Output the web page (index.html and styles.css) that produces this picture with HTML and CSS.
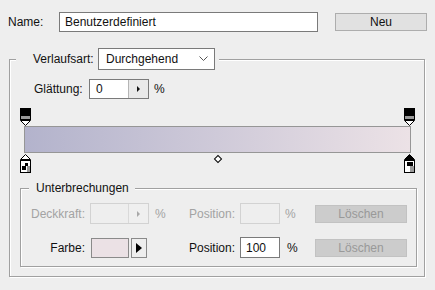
FILE: index.html
```html
<!DOCTYPE html>
<html lang="de">
<head>
  <meta charset="UTF-8">
  <title>Verlaufs-Editor</title>
  <link rel="stylesheet" href="styles.css">
</head>
<body>
  <div class="name-row">
    <span class="name-label">Name:</span>
    <div class="field name-field">Benutzerdefiniert</div>
    <button class="btn new-btn">Neu</button>
  </div>

  <fieldset class="group gradient-group">
    <legend class="type-legend">
      <span class="type-label">Verlaufsart:</span>
      <div class="field select">
        <span>Durchgehend</span>
        <svg width="9" height="6" viewBox="0 0 9 6"><path d="M0.5 0.5 L4.5 4.5 L8.5 0.5" fill="none" stroke="#555" stroke-width="1"/></svg>
      </div>
    </legend>

    <div class="smooth-row">
      <span class="smooth-label">Glättung:</span>
      <div class="field spin">
        <span class="spin-value">0</span>
        <span class="spin-arrow"><svg width="4" height="6" viewBox="0 0 4 6"><path d="M0 0 L3 3 L0 6 Z" fill="#111"/></svg></span>
      </div>
      <span class="unit">%</span>
    </div>

    <div class="stops stops-top">
      <svg class="stop" width="11" height="18" viewBox="0 0 11 18">
        <rect x="0.5" y="0.5" width="10" height="11" fill="#000" stroke="#000"/>
        <rect x="1" y="8" width="9" height="3" fill="#9a9a9a"/>
        <path d="M0.5 12.5 H10.5 L5.5 17.5 Z" fill="#fff" stroke="#000"/>
      </svg>
      <svg class="stop" width="11" height="18" viewBox="0 0 11 18">
        <rect x="0.5" y="0.5" width="10" height="11" fill="#000" stroke="#000"/>
        <rect x="1" y="8" width="9" height="3" fill="#9a9a9a"/>
        <path d="M0.5 12.5 H10.5 L5.5 17.5 Z" fill="#fff" stroke="#000"/>
      </svg>
    </div>

    <div class="gradient-bar"></div>

    <div class="stops stops-bottom">
      <svg class="stop" width="11" height="19" viewBox="0 0 11 19">
        <path d="M5.5 0.5 L10.5 5.5 H0.5 Z" fill="#fff" stroke="#000"/>
        <rect x="0.5" y="6.5" width="10" height="12" fill="#fff" stroke="#000"/>
        <rect x="5" y="9" width="3" height="3" fill="#000"/>
        <rect x="7" y="12" width="3" height="6" fill="#9a9a9a"/>
        <rect x="2" y="12" width="4" height="4" fill="#000"/>
      </svg>
      <span class="midpoint"></span>
      <svg class="stop" width="11" height="19" viewBox="0 0 11 19">
        <path d="M5.5 0.5 L10.5 5.5 H0.5 Z" fill="#000" stroke="#000"/>
        <rect x="0.5" y="6.5" width="10" height="12" fill="#fff" stroke="#000"/>
        <rect x="3" y="8" width="6" height="4" fill="#000"/>
        <rect x="6" y="12" width="4" height="6" fill="#9a9a9a"/>
      </svg>
    </div>

    <fieldset class="group stops-group">
      <legend class="stops-legend">Unterbrechungen</legend>

      <div class="stop-row disabled">
        <span class="row-label">Deckkraft:</span>
        <div class="field spin small-spin">
          <span class="spin-value"></span>
          <span class="spin-arrow"><svg width="4" height="6" viewBox="0 0 4 6"><path d="M0 0 L3 3 L0 6 Z" fill="#a8a8a8"/></svg></span>
        </div>
        <span class="unit">%</span>
        <span class="row-label">Position:</span>
        <div class="field pos-field"></div>
        <span class="unit">%</span>
        <button class="btn delete-btn">Löschen</button>
      </div>

      <div class="stop-row">
        <span class="row-label">Farbe:</span>
        <div class="color-pick">
          <span class="swatch"></span>
          <span class="swatch-arrow"><svg width="6" height="10" viewBox="0 0 6 10"><path d="M0 0 L6 5 L0 10 Z" fill="#000"/></svg></span>
        </div>
        <span class="unit"></span>
        <span class="row-label">Position:</span>
        <div class="field pos-field">100</div>
        <span class="unit unit-wide">%</span>
        <button class="btn delete-btn">Löschen</button>
      </div>
    </fieldset>
  </fieldset>
</body>
</html>
```

FILE: styles.css
```css
:root {
  --bg: #eeeeee;
  --text: #111111;
  --muted: #a3a3a3;
  --frame: #a0a0a0;
  --field-border: #7a7a7a;
}
* {
  box-sizing: border-box;
}
body {
  margin: 0;
  width: 435px;
  height: 290px;
  background: var(--bg);
  color: var(--text);
  font-family: "Liberation Sans", Arial, sans-serif;
  font-size: 12px;
  overflow: hidden;
}
.field {
  background: #fff;
  border: 1px solid var(--field-border);
  display: flex;
  align-items: center;
}
.btn {
  font: inherit;
  color: var(--text);
  background: #e1e1e1;
  border: 1px solid #adadad;
  padding: 0;
}

/* name row */
.name-row {
  display: flex;
  align-items: center;
  padding: 12px 0 0 8px;
}
.name-label {
  width: 51px;
}
.name-field {
  width: 259px;
  height: 20px;
  padding-left: 5px;
}
.new-btn {
  width: 92px;
  height: 18px;
  margin-left: 17px;
}

/* groups */
.group {
  border: 1px solid var(--frame);
  box-shadow: inset 1px 1px 0 #fff, 1px 1px 0 #fff;
  padding: 0;
  margin: 0;
}
.group legend {
  background: var(--bg);
}
.gradient-group {
  margin: 16px 10px 0 9px;
  padding-bottom: 9px;
}
.type-legend {
  display: flex;
  align-items: center;
  margin-left: 6px;
  padding: 0 4px 0 17px;
}
.type-label {
  width: 65px;
}
.select {
  width: 117px;
  height: 22px;
  padding: 0 6px 0 7px;
  justify-content: space-between;
}

.smooth-row {
  display: flex;
  align-items: center;
  margin-top: 9px;
  padding-left: 24px;
}
.smooth-label {
  width: 55px;
}
.spin {
  width: 60px;
  height: 20px;
}
.spin-value {
  flex: 1;
  padding-left: 6px;
}
.spin-arrow {
  width: 20px;
  height: 100%;
  border-left: 1px solid #b5b5b5;
  background: #e9e9e9;
  display: flex;
  align-items: center;
  justify-content: center;
}
.unit {
  padding-left: 5px;
}

/* gradient bar and stops */
.stops {
  width: 395px;
  margin-left: 10px;
  display: flex;
  justify-content: space-between;
}
.stops-top {
  margin-top: 9px;
}
.stop {
  display: block;
}
.gradient-bar {
  width: 387px;
  height: 27px;
  margin: 0 0 1px 14px;
  border: 1px solid #969696;
  background: linear-gradient(to right, #b3b3cc, #cfcad9 50%, #ece2e6);
}
.midpoint {
  width: 6px;
  height: 6px;
  margin-top: 2px;
  border: 1px solid #000;
  background: #fff;
  transform: rotate(45deg);
}

/* stops group */
.stops-group {
  margin: 8px 7px 0 10px;
  padding: 8px 0 8px 0;
}
.stops-legend {
  margin-left: 8px;
  padding: 0 6px 0 7px;
}
.stop-row {
  display: grid;
  grid-template-columns: 69px 60px 30px 60px 40px 35px 92px;
  align-items: center;
  height: 21px;
}
.stop-row + .stop-row {
  margin-top: 13px;
}
.row-label {
  text-align: right;
  padding-right: 5px;
}
.small-spin {
  width: 59px;
  height: 21px;
}
.pos-field {
  width: 40px;
  height: 21px;
  padding-left: 5px;
}
.unit-wide {
  padding-left: 7px;
}
.delete-btn {
  width: 92px;
  height: 18px;
  background: #cccccc;
  border-color: #c2c2c2;
  color: #999;
}

.disabled {
  color: var(--muted);
}
.disabled .field {
  background: var(--bg);
  border-color: #d2d2d2;
}
.disabled .spin-arrow {
  background: #efefef;
  border-left-color: #d9d9d9;
}

.color-pick {
  display: flex;
  gap: 2px;
  margin-left: 1px;
}
.swatch {
  width: 38px;
  height: 20px;
  border: 1px solid #8a8a8a;
  background: #ebe1e5;
}
.swatch-arrow {
  width: 16px;
  height: 20px;
  border: 1px solid #8a8a8a;
  background: #eeeeee;
  display: flex;
  align-items: center;
  justify-content: center;
}
```
